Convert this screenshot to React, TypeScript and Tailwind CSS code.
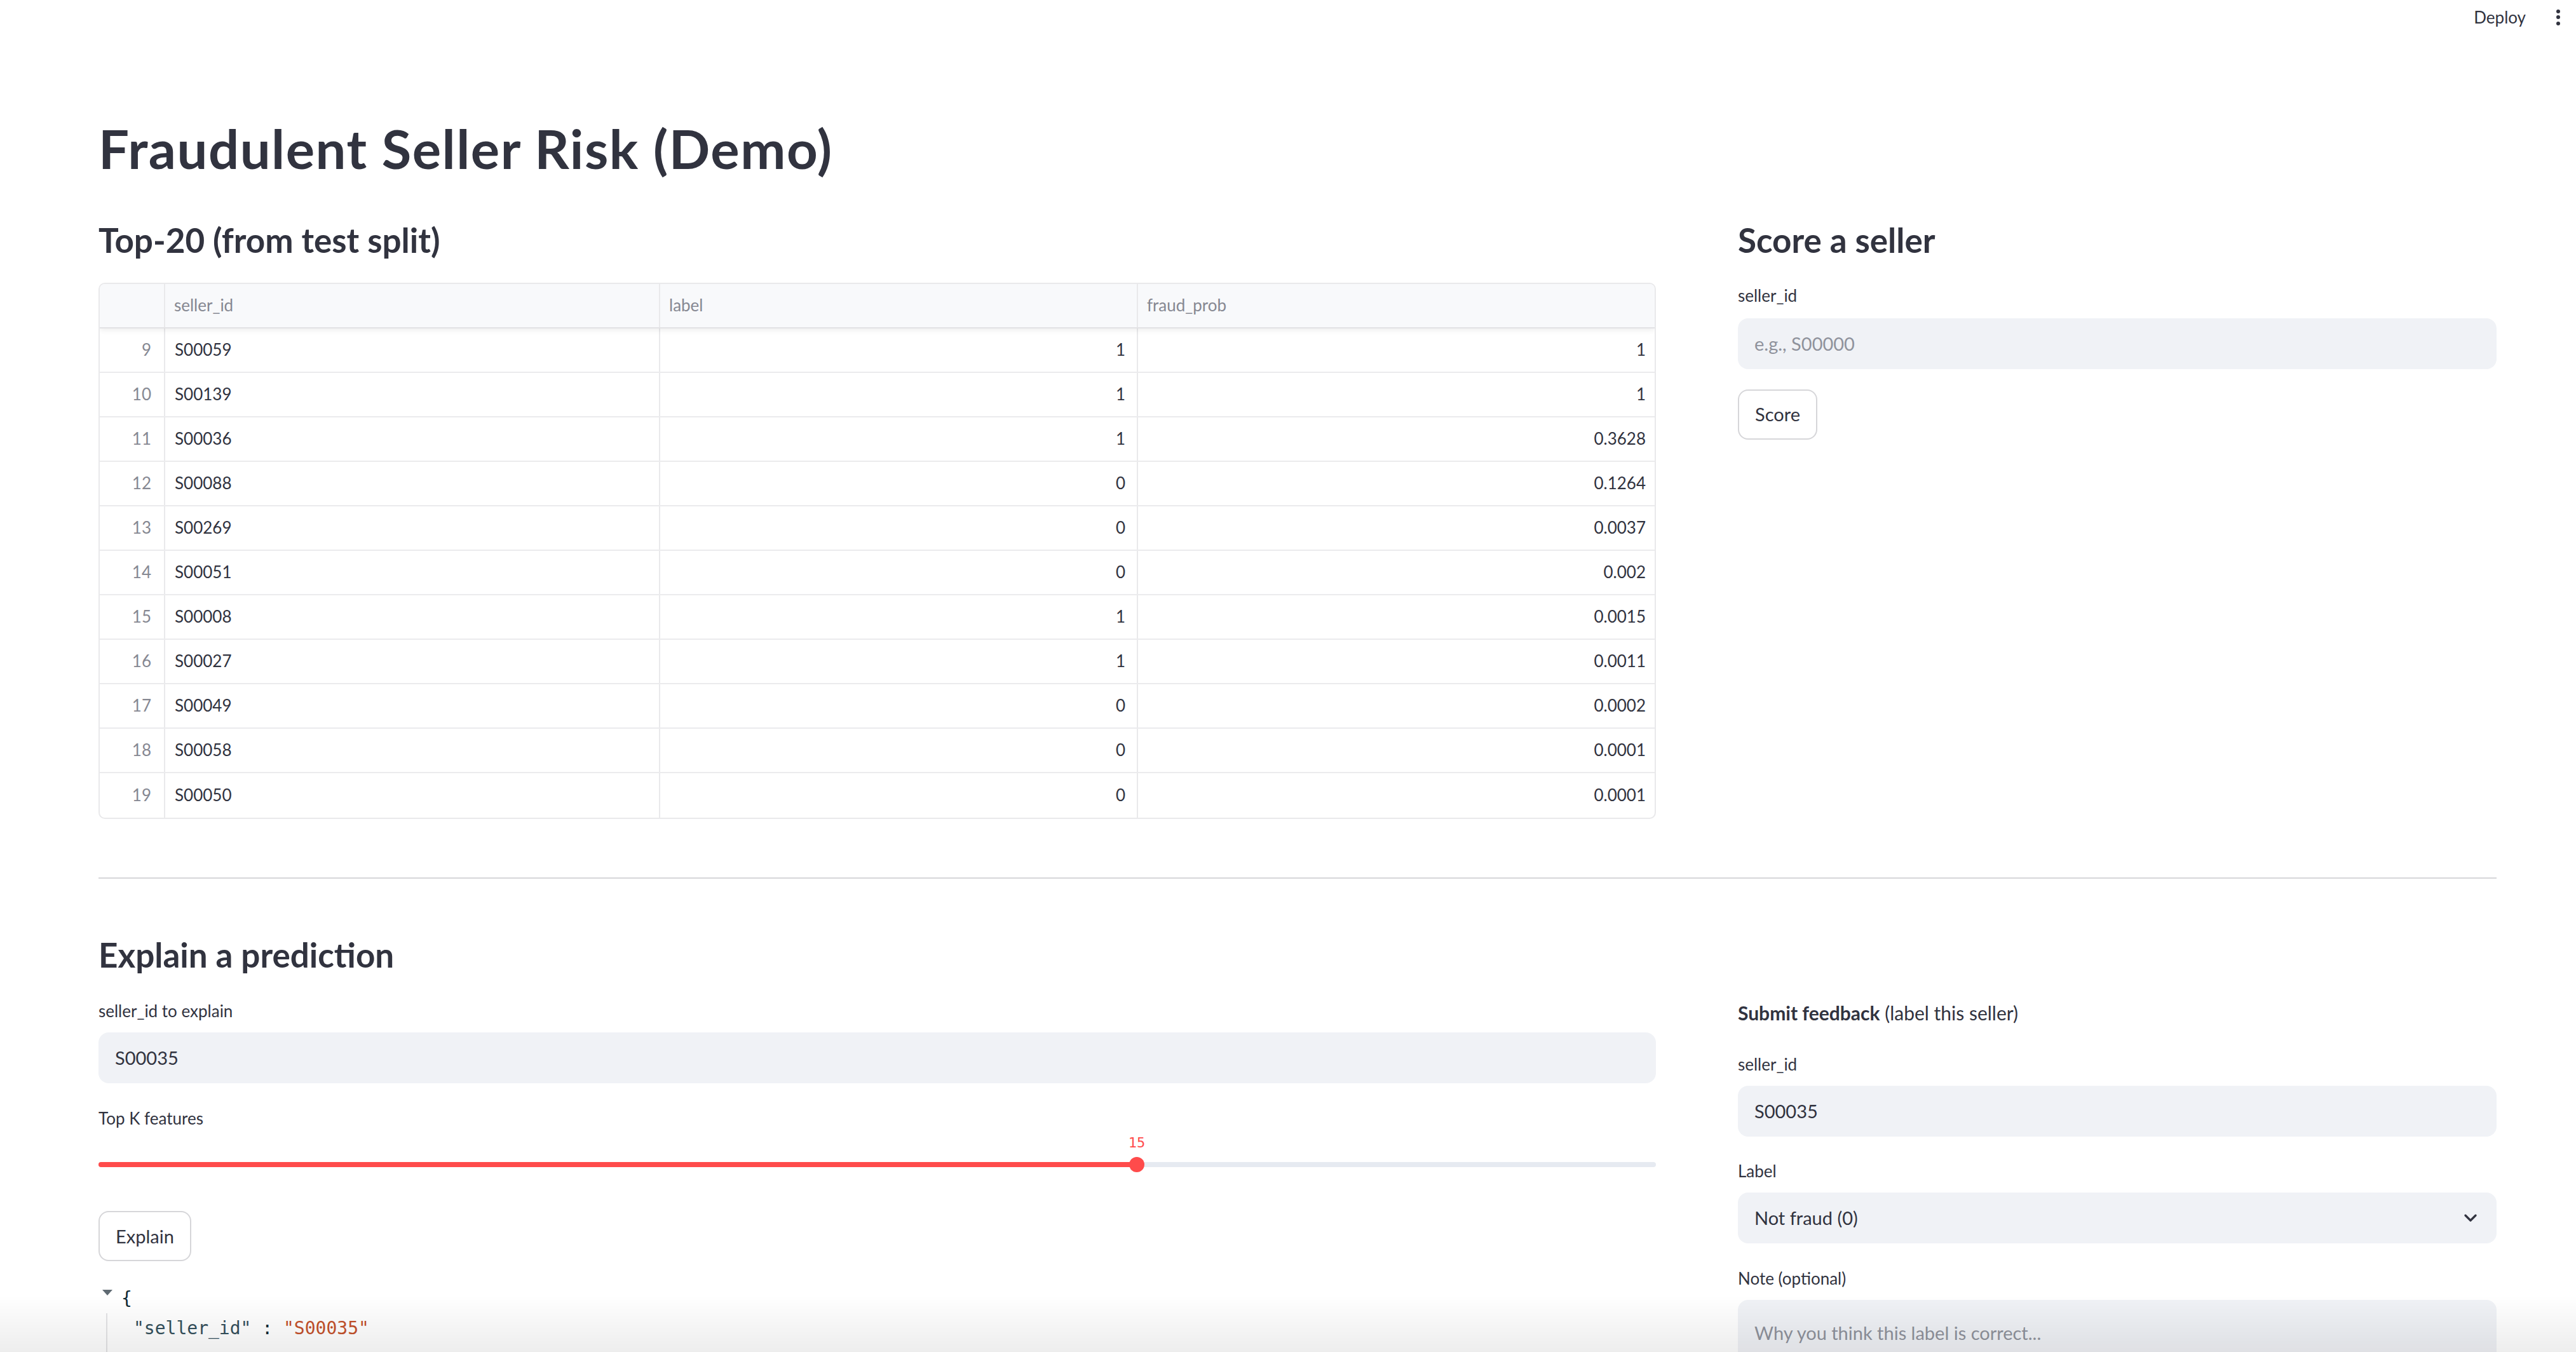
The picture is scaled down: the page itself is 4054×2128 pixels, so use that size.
import React from 'react';

type Row = { idx: number; id: string; label: number; prob: string };

const rows: Row[] = [
  { idx: 9, id: 'S00059', label: 1, prob: '1' },
  { idx: 10, id: 'S00139', label: 1, prob: '1' },
  { idx: 11, id: 'S00036', label: 1, prob: '0.3628' },
  { idx: 12, id: 'S00088', label: 0, prob: '0.1264' },
  { idx: 13, id: 'S00269', label: 0, prob: '0.0037' },
  { idx: 14, id: 'S00051', label: 0, prob: '0.002' },
  { idx: 15, id: 'S00008', label: 1, prob: '0.0015' },
  { idx: 16, id: 'S00027', label: 1, prob: '0.0011' },
  { idx: 17, id: 'S00049', label: 0, prob: '0.0002' },
  { idx: 18, id: 'S00058', label: 0, prob: '0.0001' },
  { idx: 19, id: 'S00050', label: 0, prob: '0.0001' },
];

const cols = 'grid grid-cols-[103px_779px_752px_817px]';

const Label = ({ children }: { children: React.ReactNode }) => (
  <div className="h-[40px] leading-[40px] text-[26px]">{children}</div>
);

const Field = ({ value, placeholder }: { value?: string; placeholder?: string }) => (
  <div className="h-[80px] rounded-[16px] bg-[#f0f2f6] px-[26px] flex items-center text-[29px]">
    {value ? <span>{value}</span> : <span className="text-[#8f929c]">{placeholder}</span>}
  </div>
);

const Button = ({ children }: { children: React.ReactNode }) => (
  <button className="h-[79px] px-[25px] rounded-[16px] border-2 border-[#d6d6d9] bg-white text-[29px] text-[#31333f]">
    {children}
  </button>
);

function DataTable() {
  return (
    <div className="border-2 border-[#e9e9eb] rounded-[10px] overflow-hidden text-[26px]">
      <div className={`${cols} h-[70px] bg-[#f8f9fb] border-b-2 border-[#e2e2e5] relative z-10 shadow-[0_3px_8px_rgba(0,0,0,0.07)] text-[#868892]`}>
        <div className="border-r-2 border-[#e9e9eb]" />
        <div className="border-r-2 border-[#e9e9eb] px-[14px] flex items-center">seller_id</div>
        <div className="border-r-2 border-[#e9e9eb] px-[14px] flex items-center">label</div>
        <div className="px-[14px] flex items-center">fraud_prob</div>
      </div>
      {rows.map((r, i) => (
        <div
          key={r.idx}
          className={`${cols} h-[70px] ${i < rows.length - 1 ? 'border-b-2 border-[#ebebed]' : ''}`}
        >
          <div className="border-r-2 border-[#e9e9eb] pr-[20px] flex items-center justify-end text-[#868892]">{r.idx}</div>
          <div className="border-r-2 border-[#e9e9eb] px-[15px] flex items-center">{r.id}</div>
          <div className="border-r-2 border-[#e9e9eb] pr-[18px] flex items-center justify-end">{r.label}</div>
          <div className="pr-[18px] flex items-center justify-end">{r.prob}</div>
        </div>
      ))}
    </div>
  );
}

function Slider() {
  return (
    <div className="relative h-[70px]">
      <div className="absolute left-[1634px] top-0 h-[36px] -translate-x-1/2 flex items-center font-['DejaVu_Sans_Mono',monospace] text-[22px] text-[#ff4b4b]">
        15
      </div>
      <div className="absolute left-0 right-0 top-[49px] h-[8px] rounded-full bg-[#e6eaf1]" />
      <div className="absolute left-0 w-[1634px] top-[49px] h-[8px] rounded-l-full bg-[#ff4b4b]" />
      <div className="absolute left-[1634px] top-[41px] w-[24px] h-[24px] -translate-x-1/2 rounded-full bg-[#ff4b4b]" />
    </div>
  );
}

function JsonView() {
  return (
    <div className="font-['DejaVu_Sans_Mono',monospace] text-[28px]">
      <div className="flex h-[47px] items-center">
        <svg width="16" height="9" viewBox="0 0 16 9" className="ml-[6px] mb-[18px]">
          <polygon points="0,0 16,0 8,9" fill="#5f6a72" />
        </svg>
        <span className="ml-[14px] text-[#0d2833]">{'{'}</span>
      </div>
      <div className="ml-[12px] border-l-2 border-[#e4e4e6] pl-[41px] h-[90px]">
        <div className="h-[47px] flex items-center whitespace-pre">
          <span className="text-[#34505c]">"seller_id"</span>
          <span className="text-[#0d2833]"> : </span>
          <span className="text-[#c4512b]">"S00035"</span>
        </div>
      </div>
    </div>
  );
}

export default function App() {
  return (
    <div className="relative min-h-screen bg-white text-[#31333f] font-[Lato,sans-serif] overflow-hidden">
      <header className="h-[54px] flex items-center justify-end pr-[25px]">
        <span className="text-[26px]">Deploy</span>
        <div className="ml-[48px] flex flex-col gap-[3.5px]">
          <span className="w-[6px] h-[6px] rounded-full bg-[#31333f]" />
          <span className="w-[6px] h-[6px] rounded-full bg-[#31333f]" />
          <span className="w-[6px] h-[6px] rounded-full bg-[#31333f]" />
        </div>
      </header>

      <main className="pl-[155px] pr-[125px] pb-[200px]">
        <h1 className="mt-[128px] text-[85px] leading-[1.2] font-bold tracking-[1.5px]">Fraudulent Seller Risk (Demo)</h1>

        <div className="mt-[62px] grid grid-cols-[2451px_1194px] gap-x-[129px]">
          <div>
            <h3 className="text-[53px] leading-[1.2] font-bold">Top-20 (from test split)</h3>
            <div className="mt-[35px]">
              <DataTable />
            </div>
          </div>
          <div>
            <h3 className="text-[53px] leading-[1.2] font-bold">Score a seller</h3>
            <div className="mt-[35px]">
              <Label>seller_id</Label>
            </div>
            <div className="mt-[16px]">
              <Field placeholder="e.g., S00000" />
            </div>
            <div className="mt-[32px]">
              <Button>Score</Button>
            </div>
          </div>
        </div>

        <hr className="mt-[92px] border-0 h-[2px] bg-[#d6d6d9]" />

        <div className="mt-[88px] grid grid-cols-[2451px_1194px] gap-x-[129px]">
          <div>
            <h3 className="text-[53px] leading-[1.2] font-bold">Explain a prediction</h3>
            <div className="mt-[37px]">
              <Label>seller_id to explain</Label>
            </div>
            <div className="mt-[14px]">
              <Field value="S00035" />
            </div>
            <div className="mt-[35px]">
              <Label>Top K features</Label>
            </div>
            <Slider />
            <div className="mt-[56px]">
              <Button>Explain</Button>
            </div>
            <div className="mt-[35px]">
              <JsonView />
            </div>
          </div>
          <div>
            <div className="mt-[101px] h-[44px] leading-[44px] text-[30px]">
              <span className="font-bold">Submit feedback</span> (label this seller)
            </div>
            <div className="mt-[39px]">
              <Label>seller_id</Label>
            </div>
            <div className="mt-[14px]">
              <Field value="S00035" />
            </div>
            <div className="mt-[34px]">
              <Label>Label</Label>
            </div>
            <div className="mt-[14px] h-[80px] rounded-[16px] bg-[#f0f2f6] pl-[26px] pr-[31px] flex items-center justify-between text-[29px]">
              <span>Not fraud (0)</span>
              <svg width="20" height="12" viewBox="0 0 20 12" fill="none">
                <polyline points="2,2 10,10 18,2" stroke="#31333f" strokeWidth="3.2" strokeLinecap="round" strokeLinejoin="round" />
              </svg>
            </div>
            <div className="mt-[35px]">
              <Label>Note (optional)</Label>
            </div>
            <div className="mt-[14px] h-[200px] rounded-[16px] bg-[#f0f2f6] px-[26px] pt-[30px] text-[29px] text-[#8f929c]">
              Why you think this label is correct...
            </div>
          </div>
        </div>
      </main>

      <div className="pointer-events-none fixed left-0 right-0 bottom-0 h-[90px] bg-linear-to-b from-transparent to-black/[0.07]" />
    </div>
  );
}
